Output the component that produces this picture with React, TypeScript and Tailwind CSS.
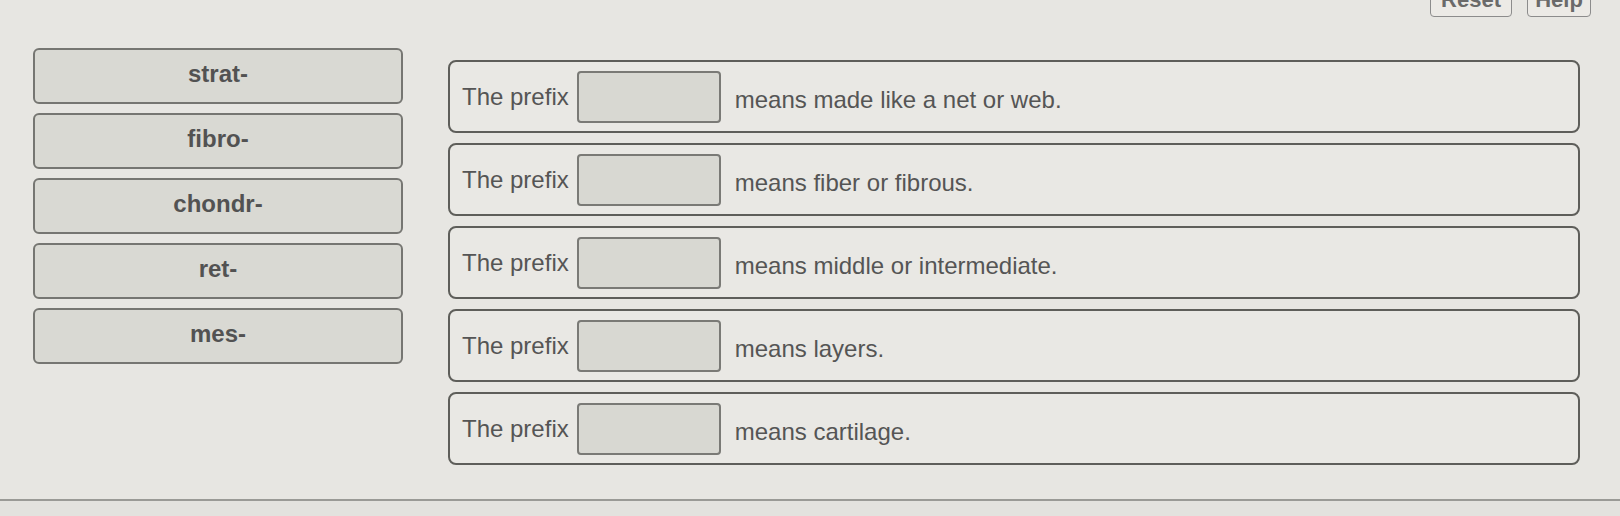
const prefixes = ['strat-', 'fibro-', 'chondr-', 'ret-', 'mes-'];

const definitions = [
  'means made like a net or web.',
  'means fiber or fibrous.',
  'means middle or intermediate.',
  'means layers.',
  'means cartilage.',
];

export default function App() {
  return (
    <div
      className="flex h-[516px] w-full flex-col overflow-hidden bg-[#e7e6e2] text-[#505050]"
      style={{ fontFamily: '"Liberation Sans", Arial, sans-serif' }}
    >
      {/* Top toolbar (scrolled partly out of view) */}
      <div className="-mt-[18px] flex justify-end gap-[15px] pr-[29px]">
        <button
          type="button"
          className="h-[35px] w-[82px] rounded-[4px] border border-[#8c8c8c] bg-[#eceae6] text-[22px] font-bold text-[#6a6a6a]"
        >
          Reset
        </button>
        <button
          type="button"
          className="h-[35px] w-[64px] rounded-[4px] border border-[#8c8c8c] bg-[#eceae6] text-[22px] font-bold text-[#6a6a6a]"
        >
          Help
        </button>
      </div>

      {/* Matching area */}
      <div className="flex gap-[45px] pl-[33px] pt-[31px]">
        {/* Draggable prefix tiles */}
        <div className="flex w-[370px] flex-col gap-[9px]">
          {prefixes.map((p) => (
            <div
              key={p}
              className="flex h-[56px] items-center justify-center rounded-[6px] border-2 border-[#767672] bg-[#d9d9d3] pb-[4px] text-[24px] font-bold text-[#525252]"
            >
              {p}
            </div>
          ))}
        </div>

        {/* Sentences with drop targets */}
        <div className="mt-[12px] flex w-[1132px] flex-col gap-[10px]">
          {definitions.map((d) => (
            <div
              key={d}
              className="flex h-[73px] items-center rounded-[8px] border-2 border-[#5e5e5a] bg-[#e9e8e4] pl-[12px]"
            >
              <span className="text-[24px] text-[#555555]">The prefix</span>
              <div className="ml-[8px] h-[52px] w-[144px] rounded-[4px] border-2 border-[#7a7a76] bg-[#d8d8d2]" />
              <span className="ml-[14px] mt-[6px] text-[24px] text-[#555555]">{d}</span>
            </div>
          ))}
        </div>
      </div>

      {/* Bottom divider */}
      <div className="mt-auto h-[17px] border-t-2 border-[#9a9a96] bg-[#e3e2de]" />
    </div>
  );
}
